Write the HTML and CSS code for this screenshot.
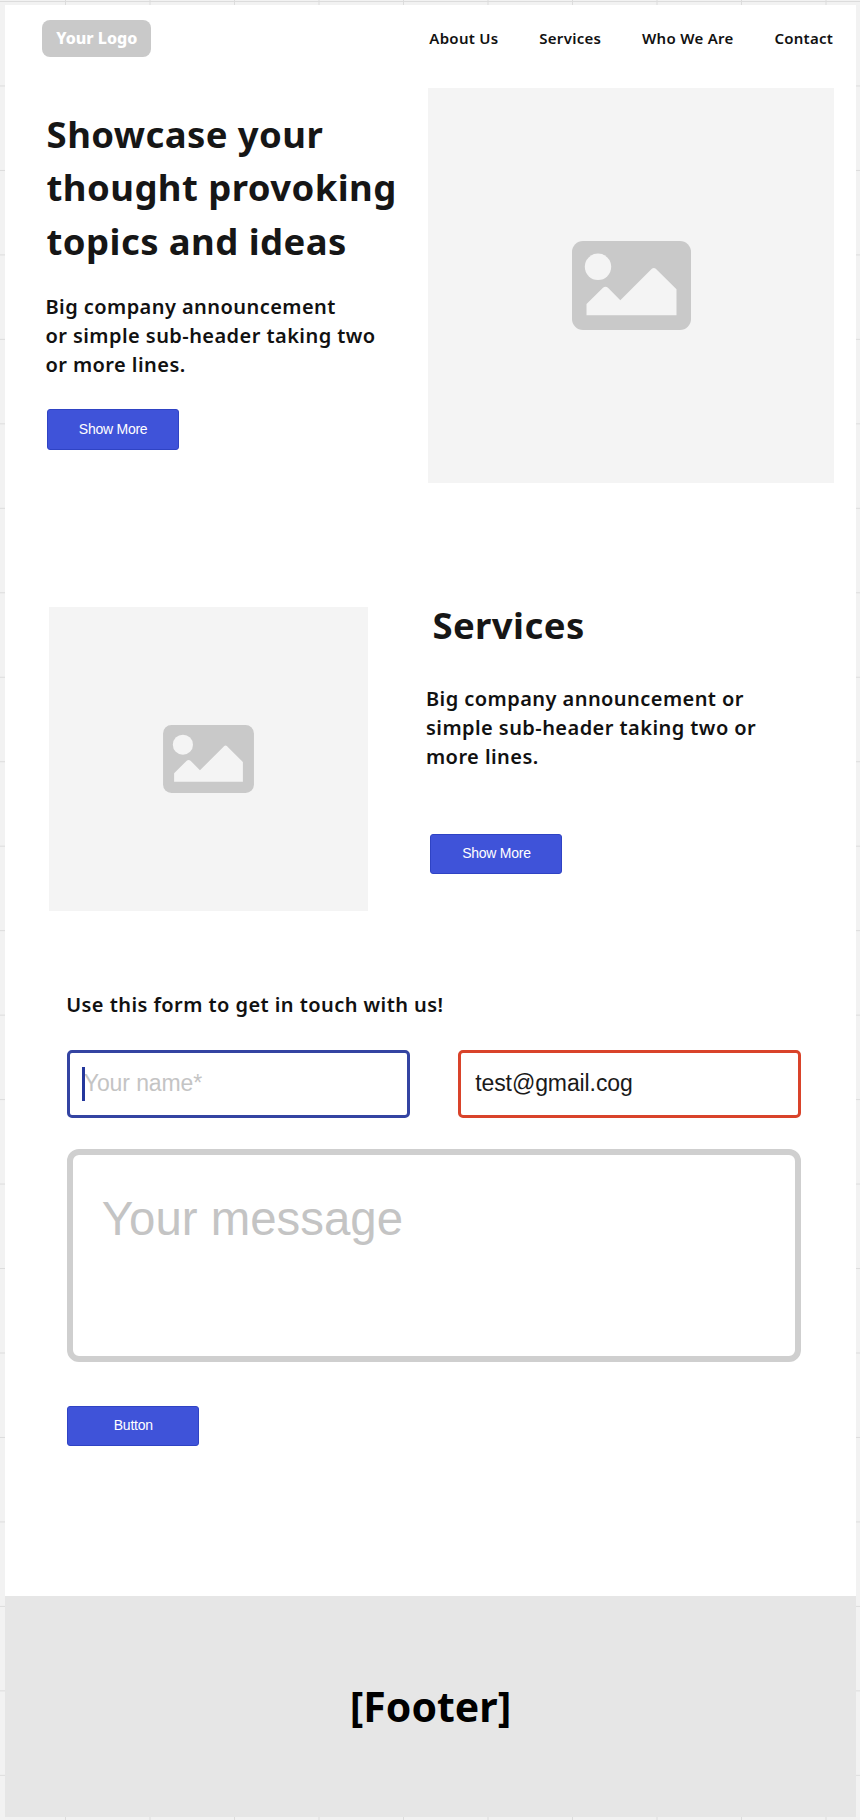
FILE: index.html
```html
<!DOCTYPE html>
<html lang="en">
<head>
<meta charset="utf-8">
<title>Landing page</title>
<link rel="stylesheet" href="styles.css">
</head>
<body>
<svg class="defs" aria-hidden="true">
  <symbol id="picture" viewBox="0 0 119 89">
    <rect width="119" height="89" rx="11" fill="#c9c9c9"/>
    <circle cx="26" cy="25.8" r="13.2" fill="#f4f4f4"/>
    <path d="M14.5 63 L31 46.7 Q33.5 44.8 36 46.7 L48.3 59.3 L79.8 27.8 Q81.8 26 83.8 27.8 L104.5 48.3 V74.3 H14.5 Z" fill="#f4f4f4"/>
  </symbol>
</svg>
<div class="page">
  <header class="header">
    <a class="logo">Your Logo</a>
    <nav class="nav"><a>About Us</a><a>Services</a><a>Who We Are</a><a>Contact</a></nav>
  </header>
  <section class="hero">
    <div class="hero-copy">
      <h1 class="title">Showcase your<br>thought provoking<br>topics and ideas</h1>
      <p class="lead hero-lead">Big company announcement<br>or simple sub-header taking two<br>or more lines.</p>
      <button class="button hero-button">Show More</button>
    </div>
    <div class="picture hero-picture"><svg class="hero-icon"><use href="#picture"/></svg></div>
  </section>
  <section class="services">
    <div class="picture services-picture"><svg class="services-icon"><use href="#picture"/></svg></div>
    <div class="services-copy">
      <h2 class="title services-title">Services</h2>
      <p class="lead services-lead">Big company announcement or<br>simple sub-header taking two or<br>more lines.</p>
      <button class="button services-button">Show More</button>
    </div>
  </section>
  <form class="contact">
    <p class="lead contact-title">Use this form to get in touch with us!</p>
    <div class="fields">
      <div class="field"><input class="input focused" placeholder="Your name*"><span class="caret"></span></div>
      <div class="field"><input class="input invalid" value="test@gmail.cog"></div>
    </div>
    <textarea class="message" placeholder="Your message"></textarea>
    <button class="button" type="button">Button</button>
  </form>
  <footer class="footer">[Footer]</footer>
</div>
</body>
</html>
```
FILE: styles.css
```css
* { box-sizing: border-box; }
html, body { margin: 0; }
body {
  height: 1820px;
  padding: 5px 3.6px 3px 4.6px;
  overflow: hidden;
  font-family: "Noto Sans", sans-serif;
  color: #111;
  background-color: #f2f2f2;
  background-image:
    linear-gradient(to right, #dcdcdc 1px, transparent 1px),
    linear-gradient(to bottom, #dcdcdc 1px, transparent 1px);
  background-size: 84.5px 84.48px;
  background-position: 65px 1px;
}
.defs { position: absolute; width: 0; height: 0; }
.page {
  display: flex;
  flex-direction: column;
  height: 1812px;
  background: #fff;
}
h1, h2, p { margin: 0; }

.header {
  display: flex;
  justify-content: space-between;
  align-items: flex-start;
  height: 82.5px;
  padding: 15px 23.2px 0 37.9px;
}
.logo {
  width: 108.6px;
  height: 37px;
  border-radius: 8px;
  background: #c9c9c9;
  color: #fff;
  font-size: 16px;
  font-weight: 800;
  line-height: 37px;
  text-align: center;
}
.nav {
  display: flex;
  gap: 40.8px;
  padding-top: 8.2px;
  font-size: 15px;
  font-weight: 600;
  line-height: 20px;
  letter-spacing: 0.28px;
}

.title {
  font-size: 36.5px;
  font-weight: 700;
  line-height: 53.5px;
  letter-spacing: 0.42px;
  white-space: nowrap;
  color: #161616;
}
.lead {
  font-size: 20px;
  font-weight: 600;
  line-height: 29px;
  letter-spacing: 0.44px;
  white-space: nowrap;
}
.button {
  display: block;
  width: 132px;
  height: 40.4px;
  padding: 0 0 2px 1px;
  border: 1px solid #2f43c4;
  border-radius: 3px;
  background: #3f53d9;
  color: #fff;
  font: 14px "Liberation Sans", sans-serif;
  letter-spacing: -0.25px;
}
.picture {
  display: flex;
  align-items: center;
  justify-content: center;
  background: #f4f4f4;
}

.hero {
  display: flex;
  justify-content: space-between;
  height: 519.5px;
  padding: 0 22px 0 42px;
}
.hero-copy { padding-top: 20.4px; }
.hero-lead { margin: 23.6px 0 30.4px -1.2px; }
.hero-picture { width: 406.6px; height: 395.5px; }
.hero-icon { width: 119px; height: 89px; }

.services {
  display: flex;
  height: 382.5px;
  padding-left: 44.4px;
}
.services-picture { width: 319px; height: 304px; }
.services-icon { width: 91px; height: 68px; }
.services-copy { padding-left: 58px; }
.services-title { margin: -7.8px 0 30.8px 6.4px; }
.services-button { margin: 63.4px 0 0 4px; }

.contact {
  height: 606.5px;
  padding: 0 55.2px 0 62.2px;
}
.contact-title { margin: 0 0 31.5px -0.6px; }
.fields {
  display: grid;
  grid-template-columns: 343px 343px;
  justify-content: space-between;
}
.field { position: relative; height: 68px; }
.input {
  display: block;
  width: 100%;
  height: 68px;
  padding: 0 15px 2px 14px;
  border: 3px solid #3444a2;
  border-radius: 5px;
  outline: 0;
  background: #fff;
  color: #1a1a1a;
  font: 23px "Liberation Sans", sans-serif;
  letter-spacing: -0.1px;
}
.input::placeholder, .message::placeholder { color: #c4c4c4; opacity: 1; }
.invalid { border-color: #d9432a; }
.caret {
  position: absolute;
  top: 17px;
  left: 15.3px;
  width: 2.6px;
  height: 34px;
  background: #24379c;
}
.message {
  display: block;
  width: 100%;
  height: 213px;
  margin: 31px 0 44px;
  padding: 37px 29px;
  border: 6px solid #cfcfcf;
  border-radius: 12px;
  outline: 0;
  resize: none;
  background: #fff;
  font: 47.4px/54px "Liberation Sans", sans-serif;
}
.footer {
  flex: 1;
  display: flex;
  align-items: center;
  justify-content: center;
  padding-bottom: 2px;
  background: #e6e6e6;
  color: #000;
  font-size: 41px;
  font-weight: 700;
}
```
